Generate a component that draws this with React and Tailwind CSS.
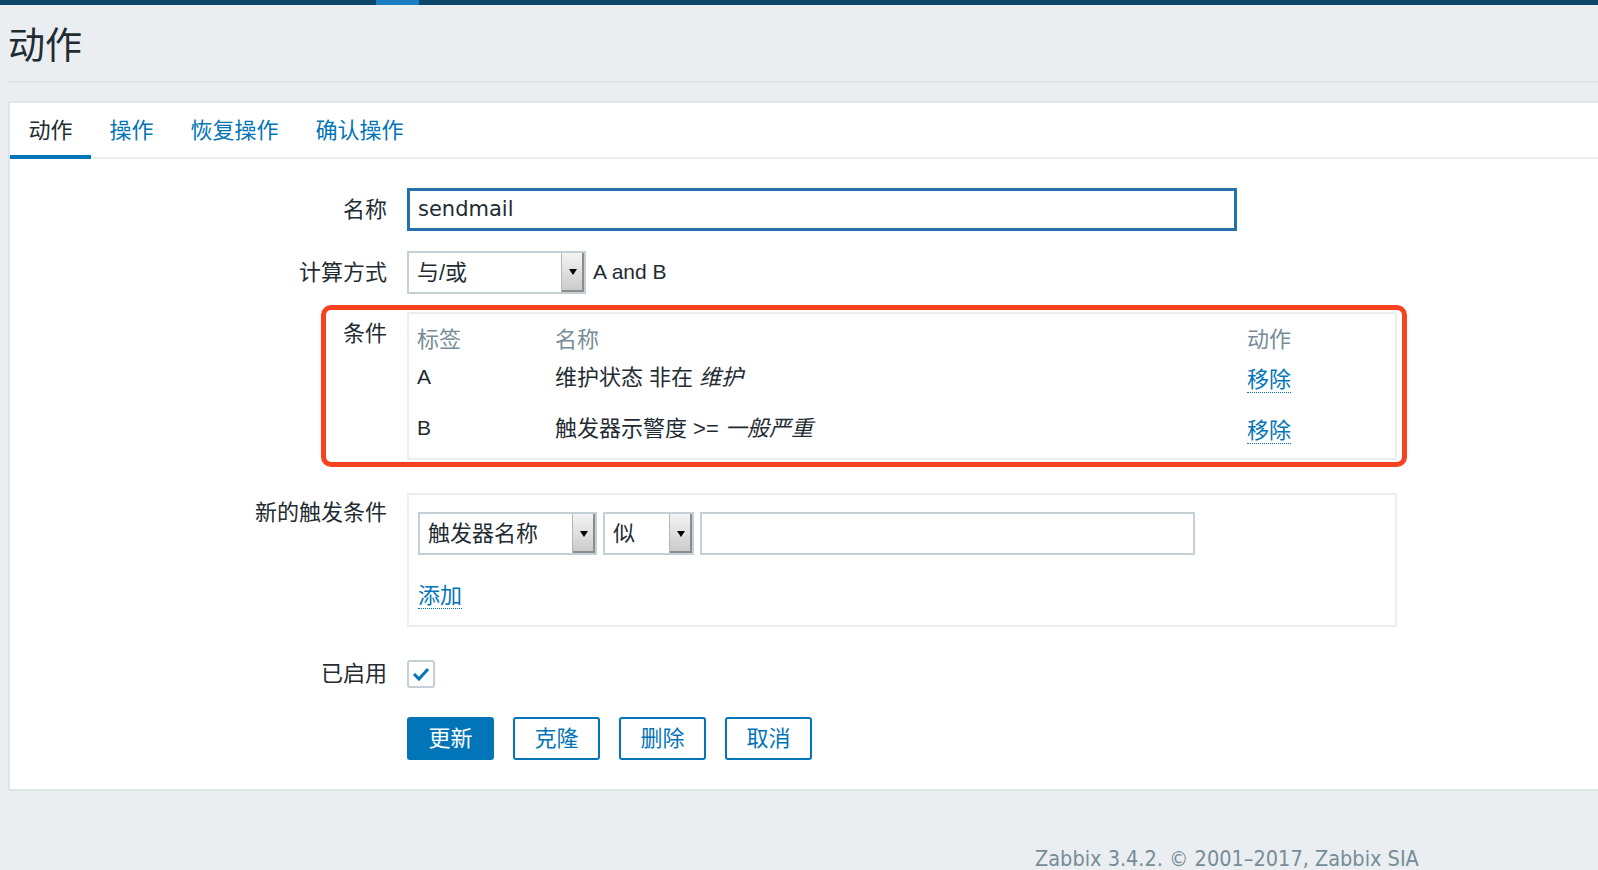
import React from "react";

const FONT = "font-['Liberation_Sans','Noto_Sans_CJK_SC',sans-serif]";

function Arrow() {
  return (
    <div className="w-[23px] self-stretch bg-linear-to-b from-[#f4f4f4] to-[#c9c9c9] border-l border-[#b5b5b5] shadow-[inset_-2px_-2px_0_#8c8c8c] flex flex-col items-center justify-center">
      <div className="w-0 h-0 border-l-[4px] border-r-[4px] border-t-[6px] border-l-transparent border-r-transparent border-t-black" />
    </div>
  );
}

function Select({ width, label }) {
  return (
    <div className={`${width} h-[43px] border-2 border-[#c5d0d6] bg-white flex items-stretch`}>
      <div className="flex-1 flex items-center pl-[8px] text-[22px] text-[#1f2c33]">{label}</div>
      <Arrow />
    </div>
  );
}

function Link({ children }) {
  return (
    <span className="text-[#0275b8] border-b-[1.5px] border-dotted border-[#0275b8] leading-[24px] inline-block">
      {children}
    </span>
  );
}

function Label({ children, className = "" }) {
  return (
    <div className={`w-[397px] pr-[20px] text-right text-[22px] text-[#1f2c33] shrink-0 ${className}`}>
      {children}
    </div>
  );
}

export default function App() {
  return (
    <div className={`${FONT} w-[1598px] h-[870px] bg-[#ebeef0] overflow-hidden relative`}>
      {/* top bar */}
      <div className="h-[5px] bg-[#0c476b] flex">
        <div className="ml-[376px] w-[43px] bg-[#1b7dc2]" />
      </div>

      {/* header */}
      <div className="pl-[8px]">
        <h1 className="mt-[23px] text-[37px] leading-[37px] text-[#1f2c33] h-[37px]">动作</h1>
        <div className="mt-[16px] h-[2px] bg-[#dfe4e7]" />
      </div>

      {/* panel */}
      <div className="ml-[8px] mt-[18px] h-[690px] bg-white border-l-2 border-t-2 border-b-2 border-[#dfe4e7] relative">
        {/* tabs */}
        <div className="flex h-[56px] border-b-2 border-[#ebeef0] text-[22px]">
          <div className="px-[18.5px] h-[56px] flex items-center border-b-[4px] border-[#0275b8] text-[#1f2c33] pt-[2px]">动作</div>
          <div className="px-[18.5px] h-[54px] flex items-center text-[#0275b8]">操作</div>
          <div className="px-[18.5px] h-[54px] flex items-center text-[#0275b8]">恢复操作</div>
          <div className="px-[18.5px] h-[54px] flex items-center text-[#0275b8]">确认操作</div>
        </div>

        {/* form */}
        <div className="pt-[29px] flex flex-col">
          {/* name */}
          <div className="flex items-center h-[43px]">
            <Label>名称</Label>
            <div className="w-[830px] h-[43px] border-[3px] border-[#2472a9] flex items-center pl-[8px] text-[21px] text-[#1f2c33] font-['DejaVu_Sans',sans-serif]">
              sendmail
            </div>
          </div>

          {/* calc */}
          <div className="flex items-center h-[44px] mt-[19px]">
            <Label>计算方式</Label>
            <Select width="w-[179px]" label="与/或" />
            <span className="ml-[7px] text-[21px] text-[#1f2c33]">A and B</span>
          </div>

          {/* conditions */}
          <div className="flex mt-[18px]">
            <Label className="pt-[7px] leading-[30px]">条件</Label>
            <div className="w-[990px] h-[148px] border-2 border-[#ebeef0] pl-[8px] pt-[11px] text-[22px]">
              <div className="flex h-[28px] items-center text-[#768d99]">
                <div className="w-[138px]">标签</div>
                <div className="w-[692px]">名称</div>
                <div>动作</div>
              </div>
              <div className="flex h-[48px] items-center text-[#1f2c33]">
                <div className="w-[138px] text-[21px]">A</div>
                <div className="w-[692px]">
                  维护状态 非在 <i>维护</i>
                </div>
                <div className="pt-[4px]"><Link>移除</Link></div>
              </div>
              <div className="flex h-[48px] items-center text-[#1f2c33] mt-[3px]">
                <div className="w-[138px] text-[21px]">B</div>
                <div className="w-[692px]">
                  触发器示警度 &gt;= <i>一般严重</i>
                </div>
                <div className="pt-[4px]"><Link>移除</Link></div>
              </div>
            </div>
          </div>

          {/* new condition */}
          <div className="flex mt-[33px]">
            <Label className="pt-[5px] leading-[30px]">新的触发条件</Label>
            <div className="w-[990px] h-[134px] border-2 border-[#ebeef0] pl-[9px] pt-[17px] text-[22px]">
              <div className="flex gap-[6px] items-center">
                <Select width="w-[179px]" label="触发器名称" />
                <Select width="w-[91px]" label="似" />
                <div className="w-[495px] h-[43px] border-2 border-[#c5d0d6] bg-white" />
              </div>
              <div className="mt-[24px]">
                <Link>添加</Link>
              </div>
            </div>
          </div>

          {/* enabled */}
          <div className="flex items-center mt-[32px] h-[29px]">
            <Label>已启用</Label>
            <div className="w-[28px] h-[28px] border-2 border-[#c5d0d6] rounded-[3px] flex items-center justify-center">
              <svg width="18" height="14" viewBox="0 0 18 14">
                <path d="M2 7 L7 12 L16 2" fill="none" stroke="#0275b8" strokeWidth="3" />
              </svg>
            </div>
          </div>

          {/* buttons */}
          <div className="flex mt-[29px] text-[22px]">
            <div className="w-[397px] shrink-0" />
            <div className="flex gap-[19px]">
              <div className="w-[87px] h-[43px] rounded-[3px] bg-[#0275b8] text-white flex items-center justify-center">更新</div>
              <div className="w-[87px] h-[43px] rounded-[3px] border-2 border-[#0275b8] bg-white text-[#0275b8] flex items-center justify-center">克隆</div>
              <div className="w-[87px] h-[43px] rounded-[3px] border-2 border-[#0275b8] bg-white text-[#0275b8] flex items-center justify-center">删除</div>
              <div className="w-[87px] h-[43px] rounded-[3px] border-2 border-[#0275b8] bg-white text-[#0275b8] flex items-center justify-center">取消</div>
            </div>
          </div>
        </div>

        {/* red annotation overlay */}
        <div className="absolute left-[311px] top-[202px] w-[1086px] h-[162px] border-[5px] border-[#f7421f] rounded-[10px] pointer-events-none" />
      </div>

      {/* footer */}
      <div className="mt-[57px] pl-[1035px] text-[21.5px] leading-[22px] text-[#768d99] font-['DejaVu_Sans_Condensed','Liberation_Sans',sans-serif] [font-stretch:condensed] whitespace-nowrap">
        Zabbix 3.4.2. © 2001–2017, Zabbix SIA
      </div>
    </div>
  );
}
